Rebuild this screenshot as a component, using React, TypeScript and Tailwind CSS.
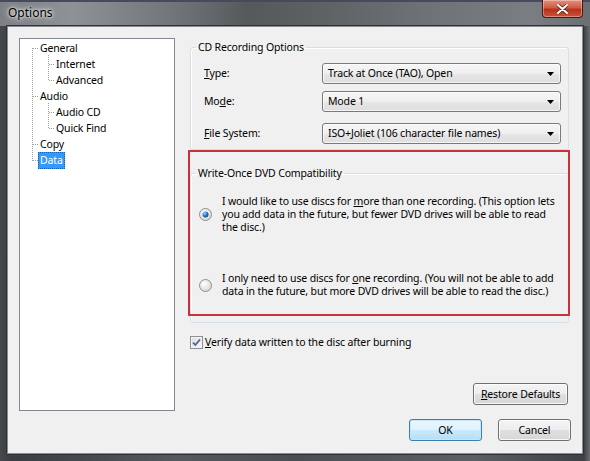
import React from "react";

const font = "font-['Noto_Sans',sans-serif]";

const TreeLines = () => (
  <svg className="absolute left-0 top-0" width="156" height="140" shapeRendering="crispEdges">
    <g stroke="#a0a0a0" strokeWidth="1" strokeDasharray="1 1">
      <line x1="12.5" y1="9" x2="12.5" y2="122" />
      <line x1="28.5" y1="16" x2="28.5" y2="42" />
      <line x1="28.5" y1="64" x2="28.5" y2="90" />
      {[9, 57, 105, 121].map((y) => (
        <line key={y} x1="13" y1={y + 0.5} x2="18" y2={y + 0.5} />
      ))}
      {[25, 41, 73, 89].map((y) => (
        <line key={y} x1="29" y1={y + 0.5} x2="34" y2={y + 0.5} />
      ))}
    </g>
  </svg>
);

const treeItems = [
  { label: "General", depth: 0 },
  { label: "Internet", depth: 1 },
  { label: "Advanced", depth: 1 },
  { label: "Audio", depth: 0 },
  { label: "Audio CD", depth: 1 },
  { label: "Quick Find", depth: 1 },
  { label: "Copy", depth: 0 },
  { label: "Data", depth: 0, selected: true },
];

const Combo = ({ value }: { value: string }) => (
  <div className="flex h-[21px] w-[239px] items-center justify-between rounded-[3px] border border-[#7a7a7a] bg-[linear-gradient(#f6f6f6_0%,#efefef_50%,#e6e6e6_51%,#dedede_100%)] pl-[5px] pr-[6px] shadow-[inset_0_0_0_1px_rgba(255,255,255,0.7)]">
    <span>{value}</span>
    <svg width="7" height="4" viewBox="0 0 7 4">
      <path d="M0 0h7L3.5 4z" fill="#000" />
    </svg>
  </div>
);

const Button = ({ children, w, def }: { children: React.ReactNode; w: string; def?: boolean }) => (
  <div
    className={`flex h-[22px] ${w} items-center justify-center whitespace-nowrap rounded-[3px] border ${
      def
        ? "border-[#3c7fb1] bg-[linear-gradient(#eaf6fd_0%,#dff2fc_50%,#c9eafc_51%,#b5def5_100%)] shadow-[inset_0_0_0_1px_#c6e7f7]"
        : "border-[#707070] bg-[linear-gradient(#f4f4f4_0%,#ededed_50%,#e0e0e0_51%,#d6d6d6_100%)] shadow-[inset_0_0_0_1px_rgba(255,255,255,0.8)]"
    }`}
  >
    {children}
  </div>
);

const Radio = ({ on }: { on?: boolean }) => (
  <svg width="13" height="13" viewBox="0 0 13 13" className="shrink-0">
    <defs>
      <radialGradient id={on ? "rgOn" : "rgOff"} cx="0.4" cy="0.35" r="0.7">
        <stop offset="0" stopColor="#ffffff" />
        <stop offset="1" stopColor="#d4d4d4" />
      </radialGradient>
      <radialGradient id="dot" cx="0.35" cy="0.3" r="0.8">
        <stop offset="0" stopColor="#a7d3f5" />
        <stop offset="0.5" stopColor="#2f78c8" />
        <stop offset="1" stopColor="#123f7a" />
      </radialGradient>
    </defs>
    <circle cx="6.5" cy="6.5" r="6" fill={on ? "url(#rgOn)" : "url(#rgOff)"} stroke="#8e8f8f" />
    {on && <circle cx="6.5" cy="6.5" r="3" fill="url(#dot)" />}
  </svg>
);

export default function App() {
  return (
    <div
      className={`flex h-[461px] w-[590px] flex-col bg-[linear-gradient(90deg,#45494d_0%,#3a3e42_2%,#55595d_30%,#4a4e52_50%,#5c6064_80%,#3e4246_99%,#6a6e72_100%)] text-[10.5px] leading-[15px] tracking-[-0.15px] text-black ${font}`}
    >
      {/* title bar */}
      <div className="flex h-[26px] shrink-0 items-start justify-between border-t-2 border-[#454b5a] bg-[linear-gradient(90deg,#7c8084_0%,#8e9296_12%,#707478_30%,#55595c_42%,#5e6265_55%,#6e7276_72%,#7a7e82_90%,#6c7074_100%)] pl-[8px] pr-[7px]">
        <span className="mt-[3px] text-[12px] tracking-normal [text-shadow:0_0_6px_#fff,0_0_3px_#fff]">Options</span>
        <div className="-mt-[2px] flex h-[18px] w-[41px] items-center justify-center rounded-b-[4px] border border-t-0 border-[#4a1810] bg-[linear-gradient(#e3907e_0%,#d25b42_45%,#b8321a_55%,#c9523a_100%)] shadow-[inset_0_0_0_1px_rgba(255,255,255,0.35)]">
          <svg width="11" height="10" viewBox="0 0 11 10">
            <path d="M1 1l9 8M10 1L1 9" stroke="#5a2012" strokeWidth="3.4" strokeLinecap="round" />
            <path d="M1 1l9 8M10 1L1 9" stroke="#fff" strokeWidth="2" strokeLinecap="round" />
          </svg>
        </div>
      </div>

      {/* client area */}
      <div className="ml-[7px] mr-[7px] flex h-[428px] border border-[#8a8e92] bg-[#f0f0f0] pl-[11px] pt-[11px] shadow-[0_0_0_1px_#2e3236]">
        {/* tree */}
        <div className="relative h-[373px] w-[156px] shrink-0 border border-[#828790] bg-white pt-[1px]">
          <TreeLines />
          {treeItems.map((it) => (
            <div key={it.label} className={`flex h-[16px] items-center ${it.depth ? "pl-[34px]" : "pl-[18px]"}`}>
              <span
                className={
                  it.selected
                    ? "border border-dotted border-[#1d5fa8] bg-[#3399ff] px-[1px] text-white"
                    : "px-[2px]"
                }
              >
                {it.label}
              </span>
            </div>
          ))}
        </div>

        {/* right column */}
        <div className="relative ml-[15px] flex w-[381px] flex-col">
          <fieldset className="mt-[2px] h-[110px] w-[379px] rounded-[3px] border border-[#d5dfe5] shadow-[inset_1px_1px_0_#fff]">
            <legend className="ml-[5px] px-[2px]">CD Recording Options</legend>
            <div className="mt-[8px] flex flex-col pl-[13px]">
              <div className="flex items-center">
                <span className="w-[118px]">
                  <u>T</u>ype:
                </span>
                <Combo value="Track at Once (TAO), Open" />
              </div>
              <div className="mt-[7px] flex items-center">
                <span className="w-[118px]">
                  Mo<u>d</u>e:
                </span>
                <Combo value="Mode 1" />
              </div>
              <div className="mt-[11px] flex items-center">
                <span className="w-[118px]">
                  <u>F</u>ile System:
                </span>
                <Combo value="ISO+Joliet (106 character file names)" />
              </div>
            </div>
          </fieldset>

          <fieldset className="mt-[16px] h-[157px] w-[379px] rounded-[3px] border border-[#d5dfe5] shadow-[inset_1px_1px_0_#fff]">
            <legend className="ml-[5px] px-[2px]">Write-Once DVD Compatibility</legend>
            <div className="mt-[14px] flex items-center gap-[10px] whitespace-nowrap pl-[8px] leading-[13px]">
              <Radio on />
              <span>
                I would like to use discs for <u>m</u>ore than one recording. (This option lets
                <br />
                you add data in the future, but fewer DVD drives will be able to read
                <br />
                the disc.)
              </span>
            </div>
            <div className="mt-[38px] flex items-center gap-[10px] whitespace-nowrap pl-[8px] leading-[13px]">
              <Radio />
              <span>
                I only need to use discs for <u>o</u>ne recording. (You will not be able to add
                <br />
                data in the future, but more DVD drives will be able to read the disc.)
              </span>
            </div>
          </fieldset>

          <div className="mt-[12px] flex items-center gap-[2px]">
            <div className="flex h-[13px] w-[13px] items-center justify-center border border-[#8e8f8f] bg-[linear-gradient(135deg,#dcdcdc,#f8f8f8)] shadow-[inset_0_0_0_1px_#f4f4f4]">
              <svg width="9" height="9" viewBox="0 0 9 9">
                <path d="M1 4.5l2.3 2.5L8 1.5" stroke="#4a5f97" strokeWidth="1.8" fill="none" />
              </svg>
            </div>
            <span>
              <u>V</u>erify data written to the disc after burning
            </span>
          </div>

          <div className="mt-[33px] flex justify-end pr-[3px]">
            <Button w="w-[95px]">
              <span>
                <u>R</u>estore Defaults
              </span>
            </Button>
          </div>

          <div className="mt-[14px] flex justify-end gap-[16px]">
            <Button w="w-[73px]" def>
              OK
            </Button>
            <Button w="w-[73px]">Cancel</Button>
          </div>

          {/* annotation */}
          <div className="pointer-events-none absolute left-[-2px] top-[112px] h-[166px] w-[382px] border-2 border-[#c8323c]" />
        </div>
      </div>
    </div>
  );
}
